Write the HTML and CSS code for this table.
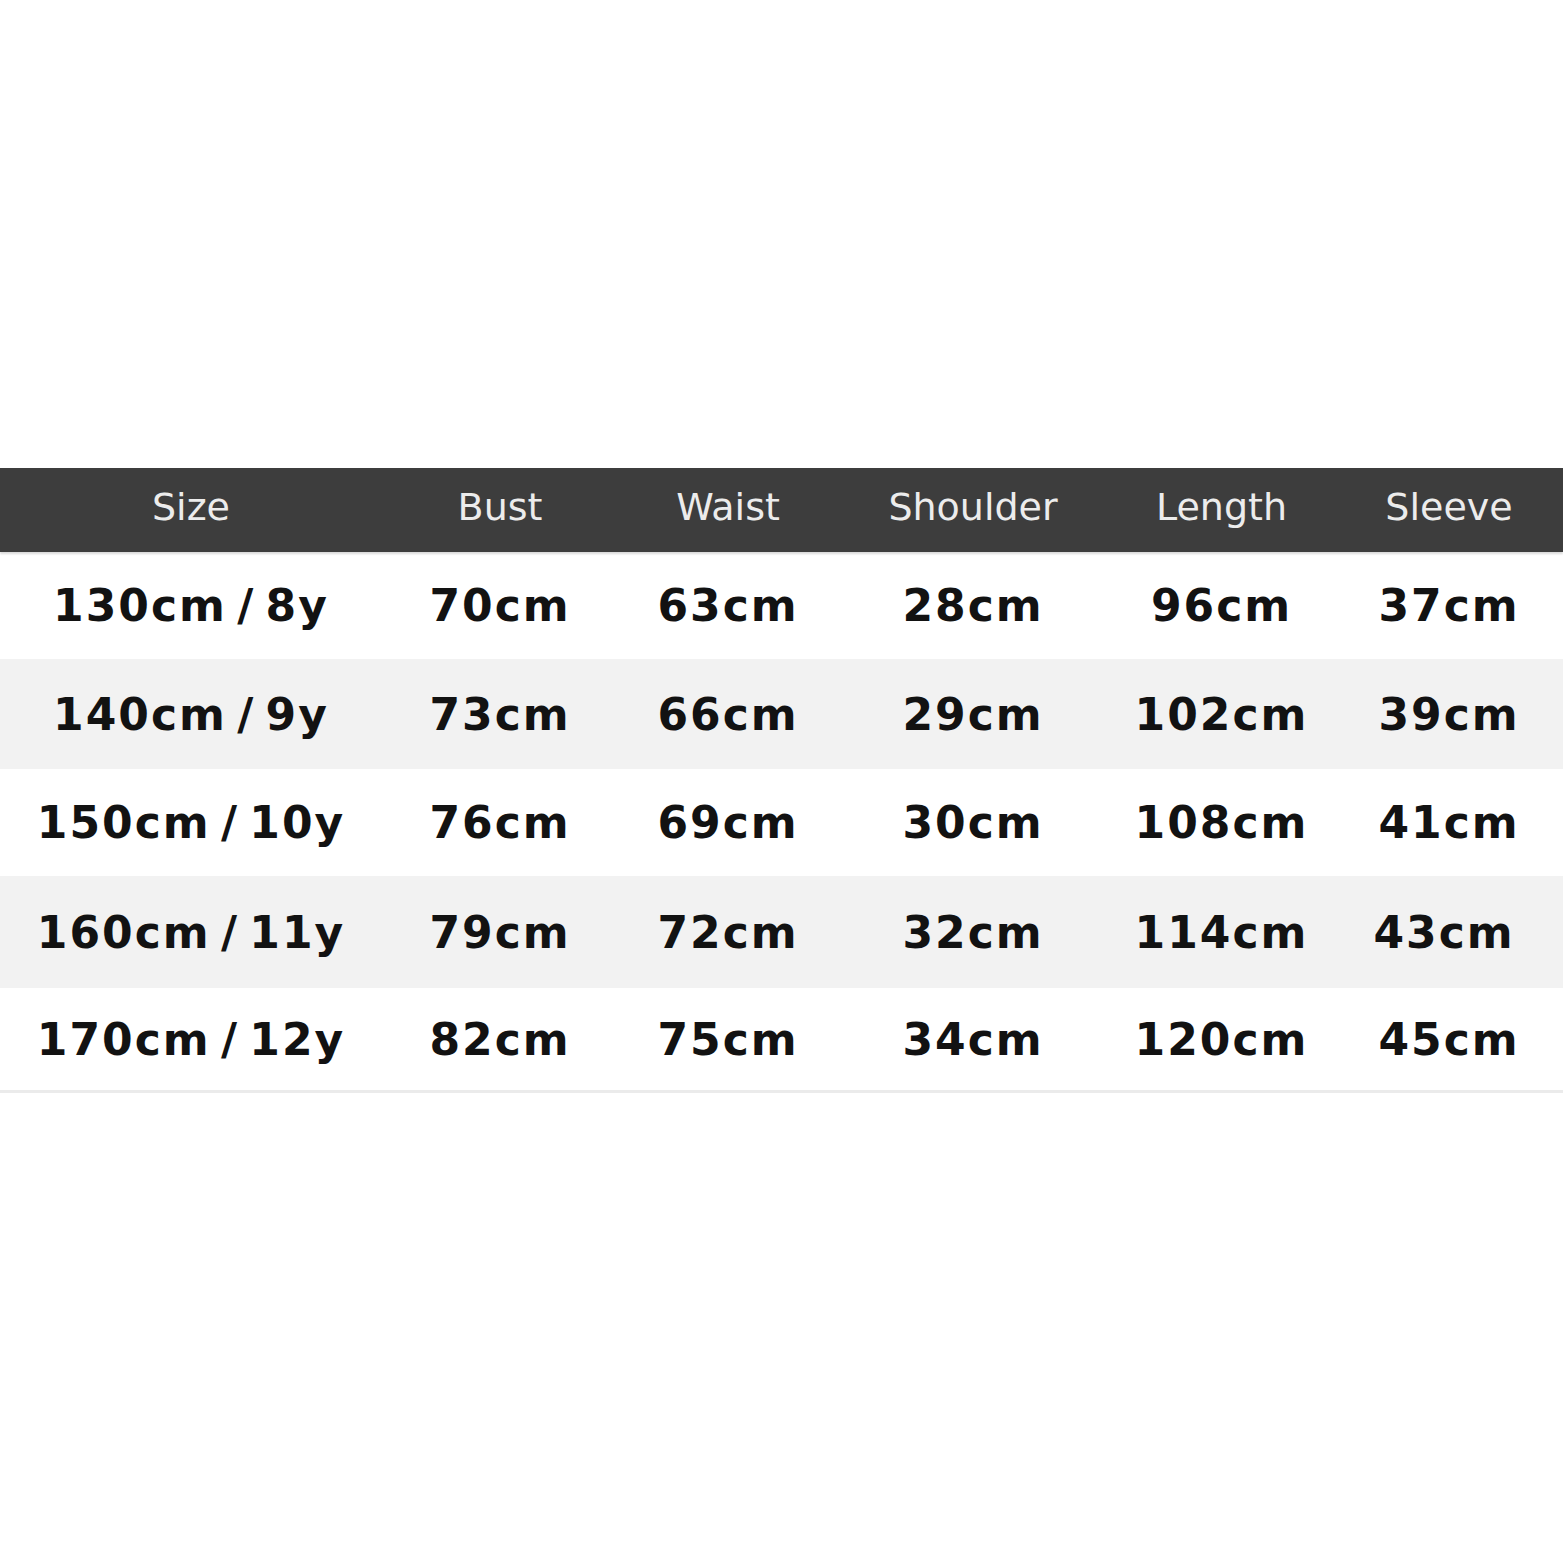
FILE: index.html
```html
<!DOCTYPE html>
<html>
<head>
<meta charset="utf-8">
<link rel="stylesheet" href="styles.css">
</head>
<body>
<div class="page">
  <div class="chart">
    <div class="row head">
      <div>Size</div><div>Bust</div><div>Waist</div><div>Shoulder</div><div>Length</div><div>Sleeve</div>
    </div>
    <div class="row r1">
      <div>130cm / 8y</div><div>70cm</div><div>63cm</div><div>28cm</div><div>96cm</div><div>37cm</div>
    </div>
    <div class="row r2 alt">
      <div>140cm / 9y</div><div>73cm</div><div>66cm</div><div>29cm</div><div>102cm</div><div>39cm</div>
    </div>
    <div class="row r3">
      <div>150cm / 10y</div><div>76cm</div><div>69cm</div><div>30cm</div><div>108cm</div><div>41cm</div>
    </div>
    <div class="row r4 alt">
      <div>160cm / 11y</div><div>79cm</div><div>72cm</div><div>32cm</div><div>114cm</div><div class="shift">43cm</div>
    </div>
    <div class="row r5 last">
      <div>170cm / 12y</div><div>82cm</div><div>75cm</div><div>34cm</div><div>120cm</div><div>45cm</div>
    </div>
  </div>
</div>
</body>
</html>
```

FILE: styles.css
```css
html, body {
  margin: 0;
  padding: 0;
  background: #ffffff;
}
.page {
  width: 1563px;
  height: 1563px;
  padding-top: 468px;
  box-sizing: border-box;
}
.chart {
  width: 1563px;
}
.row {
  display: grid;
  grid-template-columns: 382px 236px 220px 270px 227px 1fr;
  align-items: center;
  text-align: center;
  font-family: "DejaVu Sans", sans-serif;
  font-weight: bold;
  font-size: 44px;
  letter-spacing: 2px;
  word-spacing: -7px;
  color: #121212;
  background: #ffffff;
}
.row > div {
  white-space: nowrap;
}
.head {
  height: 84px;
  background: #3d3d3d;
  color: #ececec;
  font-weight: normal;
  font-size: 38px;
  letter-spacing: 0;
  word-spacing: 0;
  box-shadow: 0 2px 2px rgba(0,0,0,0.15);
  position: relative;
}
.head > div {
  padding-bottom: 6px;
}
.r1 { height: 107px; }
.r2 { height: 110px; }
.r3 { height: 107px; }
.r4 { height: 112px; }
.r5 { height: 102px; }
.alt {
  background: #f2f2f2;
}
.last {
  border-bottom: 3px solid #ebebeb;
}
.shift {
  padding-right: 10px;
}
```
